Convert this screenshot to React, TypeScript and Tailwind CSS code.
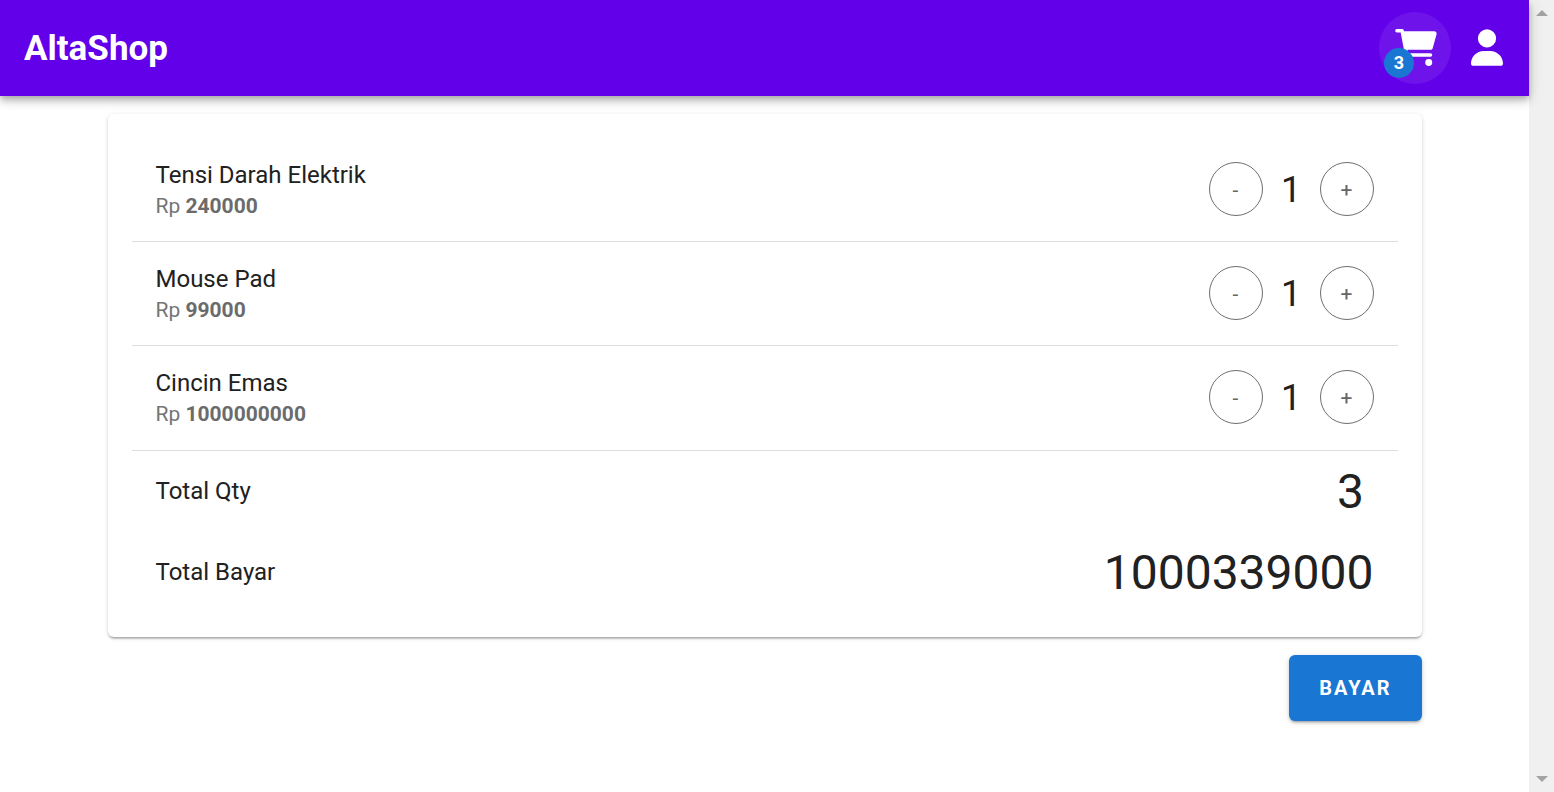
import { useState } from "react";
import { FaUser } from "react-icons/fa6";

type Item = { name: string; price: number; qty: number };

const initialItems: Item[] = [
  { name: "Tensi Darah Elektrik", price: 240000, qty: 1 },
  { name: "Mouse Pad", price: 99000, qty: 1 },
  { name: "Cincin Emas", price: 1000000000, qty: 1 },
];

const roundButton =
  "flex size-[54px] items-center justify-center rounded-full border border-[#6f6f6f] pt-1 text-[21px] text-[#666666]";

function CartIcon() {
  return (
    <svg viewBox="0 0 576 512" className="h-[37px] w-[42px]" fill="currentColor" aria-hidden="true">
      <path d="M96 0C107.5 0 117.4 8.19 119.6 19.51L121.1 32H541.8C562.1 32 578.3 52.25 572.6 72.66L518.6 264.7C514.7 278.5 502.1 288 487.8 288H170.7L179.9 336H488C501.3 336 512 346.7 512 360C512 373.3 501.3 384 488 384H159.1C148.5 384 138.6 375.8 136.4 364.5L76.14 48H24C10.75 48 0 37.25 0 24C0 10.75 10.75 0 24 0H96Z" />
      <circle cx="176" cy="464" r="48" />
      <circle cx="464" cy="464" r="48" />
    </svg>
  );
}

function Header({ count }: { count: number }) {
  return (
    <header className="relative z-10 flex h-24 items-center justify-between bg-[#6200ea] pr-[6px] pl-6 text-white shadow-[0_3px_6px_-1px_rgba(0,0,0,0.2),0_6px_8px_rgba(0,0,0,0.14),0_1px_15px_rgba(0,0,0,0.12)]">
      <a href="#" className="pt-[2px] text-[35px] font-bold">
        AltaShop
      </a>
      <nav className="flex">
        <button
          aria-label="Keranjang"
          className="relative flex size-[72px] items-center justify-center rounded-full bg-white/8 pb-px pl-[2px]"
        >
          <CartIcon />
          <span className="absolute bottom-[6px] left-[5px] flex size-[30px] items-center justify-center rounded-full bg-[#1976d2] text-lg font-bold">
            {count}
          </span>
        </button>
        <button aria-label="Akun" className="flex size-[72px] items-center justify-center rounded-full pb-px">
          <FaUser className="h-[37px] w-8" />
        </button>
      </nav>
    </header>
  );
}

function CartRow({ item, onChange }: { item: Item; onChange: (step: number) => void }) {
  return (
    <li className="flex h-[104px] items-center justify-between border-b border-[#dedede] px-6 pb-px last:h-[105px] last:pb-[2px]">
      <div className="pb-[2px]">
        <h2 className="text-2xl leading-9">{item.name}</h2>
        <p className="text-[21px] leading-[27px] text-[#757575]">
          Rp <strong className="font-bold text-[#6b6b6b]">{item.price}</strong>
        </p>
      </div>
      <div className="flex items-center">
        <button aria-label={`Kurangi ${item.name}`} className={roundButton} onClick={() => onChange(-1)}>
          -
        </button>
        <span className="w-[57px] pt-[2px] text-center text-4xl">{item.qty}</span>
        <button aria-label={`Tambah ${item.name}`} className={roundButton} onClick={() => onChange(1)}>
          +
        </button>
      </div>
    </li>
  );
}

function TotalRow({ label, value }: { label: string; value: number }) {
  return (
    <div className="flex h-[81px] items-center justify-between px-6">
      <dt className="pb-[2px] text-2xl">{label}</dt>
      <dd className="min-w-[46px] text-center text-5xl">{value}</dd>
    </div>
  );
}

function ScrollTrack() {
  return (
    <div aria-hidden="true" className="flex w-[25px] shrink-0 flex-col items-center justify-between bg-[#f0f0f0] py-[10px]">
      <svg width="12" height="6" viewBox="0 0 12 6" fill="#a3a3a3">
        <path d="M0 6L6 0L12 6Z" />
      </svg>
      <svg width="12" height="6" viewBox="0 0 12 6" fill="#a3a3a3">
        <path d="M0 0L6 6L12 0Z" />
      </svg>
    </div>
  );
}

export default function App() {
  const [items, setItems] = useState(initialItems);
  const totalQty = items.reduce((sum, item) => sum + item.qty, 0);
  const totalPrice = items.reduce((sum, item) => sum + item.qty * item.price, 0);

  const changeQty = (name: string, step: number) =>
    setItems((list) =>
      list.map((item) => (item.name === name ? { ...item, qty: Math.max(0, item.qty + step) } : item)),
    );

  return (
    <div className="flex min-h-screen bg-white font-[Roboto,sans-serif] text-[#212121]">
      <div className="min-w-0 flex-1">
        <Header count={totalQty} />
        <main className="mx-auto max-w-[1350px] p-[18px]">
          <section className="rounded-md bg-white p-6 shadow-[0_3px_2px_-2px_rgba(0,0,0,0.2),0_2px_2px_rgba(0,0,0,0.14),0_1px_5px_rgba(0,0,0,0.12)]">
            <ul>
              {items.map((item) => (
                <CartRow key={item.name} item={item} onChange={(step) => changeQty(item.name, step)} />
              ))}
            </ul>
            <dl>
              <TotalRow label="Total Qty" value={totalQty} />
              <TotalRow label="Total Bayar" value={totalPrice} />
            </dl>
          </section>
          <div className="mt-[18px] flex justify-end">
            <button className="h-[66px] rounded-md bg-[#1976d2] px-[30px] text-xl font-bold tracking-widest text-white uppercase shadow-[0_3px_2px_-2px_rgba(0,0,0,0.2),0_2px_3px_rgba(0,0,0,0.14),0_1px_6px_rgba(0,0,0,0.12)]">
              Bayar
            </button>
          </div>
        </main>
      </div>
      <ScrollTrack />
    </div>
  );
}
